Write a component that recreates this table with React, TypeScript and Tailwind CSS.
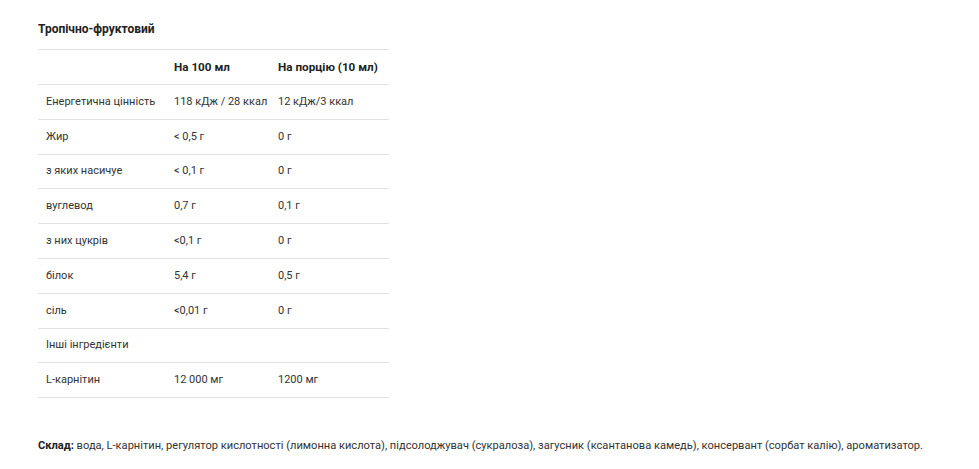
const ROWS: [string, string, string][] = [
  ['Енергетична цінність', '118 кДж / 28 ккал', '12 кДж/3 ккал'],
  ['Жир', '< 0,5 г', '0 г'],
  ['з яких насичуе', '< 0,1 г', '0 г'],
  ['вуглевод', '0,7 г', '0,1 г'],
  ['з них цукрів', '<0,1 г', '0 г'],
  ['білок', '5,4 г', '0,5 г'],
  ['сіль', '<0,01 г', '0 г'],
  ['Інші інгредієнти', '', ''],
  ['L-карнітин', '12 000 мг', '1200 мг'],
]

export default function App() {
  return (
    <div
      className="min-h-screen bg-white px-[38px] pt-[20px] text-[11px] leading-[18px] text-[#333]"
      style={{ fontFamily: 'Roboto, "Liberation Sans", sans-serif' }}
    >
      <div className="mb-[11px] text-[12px] font-bold text-[#222]">Тропічно-фруктовий</div>

      <table className="w-[351px] table-fixed border-collapse">
        <colgroup>
          <col className="w-[128px]" />
          <col className="w-[104px]" />
          <col />
        </colgroup>
        <thead>
          <tr className="h-[35px] border-t border-[#e2e2e2]">
            <th className="px-2 text-left font-normal"></th>
            <th className="px-2 text-left text-[11.7px] font-bold whitespace-nowrap text-[#222]">На 100 мл</th>
            <th className="px-2 text-left text-[11.7px] font-bold whitespace-nowrap text-[#222]">На порцію (10 мл)</th>
          </tr>
        </thead>
        <tbody>
          {ROWS.map(([label, per100, perServing]) => (
            <tr key={label} className="h-[34.8px] border-t border-b border-[#e2e2e2]">
              <td className="px-2 whitespace-nowrap">{label}</td>
              <td className="px-2 whitespace-nowrap">{per100}</td>
              <td className="px-2 whitespace-nowrap">{perServing}</td>
            </tr>
          ))}
        </tbody>
      </table>

      <p className="mt-[39px] whitespace-nowrap text-[11.1px]">
        <span className="font-bold text-[#222]">Склад:</span> вода, L-карнітин, регулятор кислотності (лимонна кислота),
        підсолоджувач (сукралоза), загусник (ксантанова камедь), консервант (сорбат калію), ароматизатор.
      </p>
    </div>
  )
}
